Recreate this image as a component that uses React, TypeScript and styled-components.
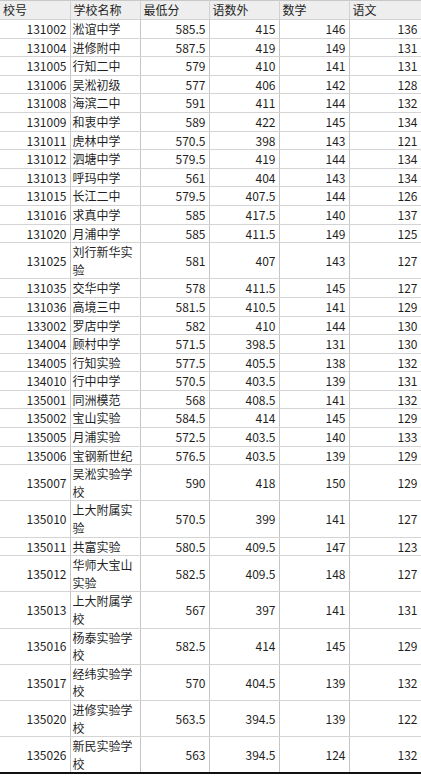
import { createGlobalStyle, styled } from 'styled-components'

type Row = [string, string, string, string, string, string]

const rows: Row[] = [
  ['131002', '淞谊中学', '585.5', '415', '146', '136'],
  ['131004', '进修附中', '587.5', '419', '149', '131'],
  ['131005', '行知二中', '579', '410', '141', '131'],
  ['131006', '吴淞初级', '577', '406', '142', '128'],
  ['131008', '海滨二中', '591', '411', '144', '132'],
  ['131009', '和衷中学', '589', '422', '145', '134'],
  ['131011', '虎林中学', '570.5', '398', '143', '121'],
  ['131012', '泗塘中学', '579.5', '419', '144', '134'],
  ['131013', '呼玛中学', '561', '404', '143', '134'],
  ['131015', '长江二中', '579.5', '407.5', '144', '126'],
  ['131016', '求真中学', '585', '417.5', '140', '137'],
  ['131020', '月浦中学', '585', '411.5', '149', '125'],
  ['131025', '刘行新华实验', '581', '407', '143', '127'],
  ['131035', '交华中学', '578', '411.5', '145', '127'],
  ['131036', '高境三中', '581.5', '410.5', '141', '129'],
  ['133002', '罗店中学', '582', '410', '144', '130'],
  ['134004', '顾村中学', '571.5', '398.5', '131', '130'],
  ['134005', '行知实验', '577.5', '405.5', '138', '132'],
  ['134010', '行中中学', '570.5', '403.5', '139', '131'],
  ['135001', '同洲模范', '568', '408.5', '141', '132'],
  ['135002', '宝山实验', '584.5', '414', '145', '129'],
  ['135005', '月浦实验', '572.5', '403.5', '140', '133'],
  ['135006', '宝钢新世纪', '576.5', '403.5', '139', '129'],
  ['135007', '吴淞实验学校', '590', '418', '150', '129'],
  ['135010', '上大附属实验', '570.5', '399', '141', '127'],
  ['135011', '共富实验', '580.5', '409.5', '147', '123'],
  ['135012', '华师大宝山实验', '582.5', '409.5', '148', '127'],
  ['135013', '上大附属学校', '567', '397', '141', '131'],
  ['135016', '杨泰实验学校', '582.5', '414', '145', '129'],
  ['135017', '经纬实验学校', '570', '404.5', '139', '132'],
  ['135020', '进修实验学校', '563.5', '394.5', '139', '122'],
  ['135026', '新民实验学校', '563', '394.5', '124', '132'],
]

const headers = ['校号', '学校名称', '最低分', '语数外', '数学', '语文']

const GlobalStyle = createGlobalStyle`
  html, body {
    margin: 0;
    padding: 0;
    background: #ffffff;
  }
  body {
    font-family: 'Noto Sans CJK SC', 'Noto Sans', sans-serif;
  }
`

const Sheet = styled.table`
  width: 421px;
  table-layout: fixed;
  border-collapse: collapse;
  font-size: 12px;
  color: #1f1f1f;
  border-bottom: 2px solid #111111;
`

const HeadCell = styled.th`
  height: 18px;
  padding: 0 3px;
  line-height: 18px;
  font-weight: 400;
  text-align: left;
  background: #eeeeee;
  border: 1px solid #d2d2d2;
  border-top: 1px solid #c8c8c8;
  &:first-child {
    border-left: none;
  }
`

const Cell = styled.td<{ $align: 'left' | 'right' }>`
  padding: 0 3px 0 2px;
  line-height: 17.6px;
  text-align: ${({ $align }) => $align};
  vertical-align: middle;
  border: 1px solid #d4d4d4;
  border-right-color: #c6c6c6;
  border-left-color: #c6c6c6;
  word-break: break-all;
  &:first-child {
    border-left: none;
  }
`

const widths = [70, 70, 69, 70, 70, 72]

export default function App() {
  return (
    <>
      <GlobalStyle />
      <Sheet>
        <colgroup>
          {widths.map((w, i) => (
            <col key={i} style={{ width: w }} />
          ))}
        </colgroup>
        <thead>
          <tr>
            {headers.map(h => (
              <HeadCell key={h}>{h}</HeadCell>
            ))}
          </tr>
        </thead>
        <tbody>
          {rows.map(r => (
            <tr key={r[0]}>
              {r.map((v, i) => (
                <Cell key={i} $align={i === 1 ? 'left' : 'right'}>
                  {v}
                </Cell>
              ))}
            </tr>
          ))}
        </tbody>
      </Sheet>
    </>
  )
}
